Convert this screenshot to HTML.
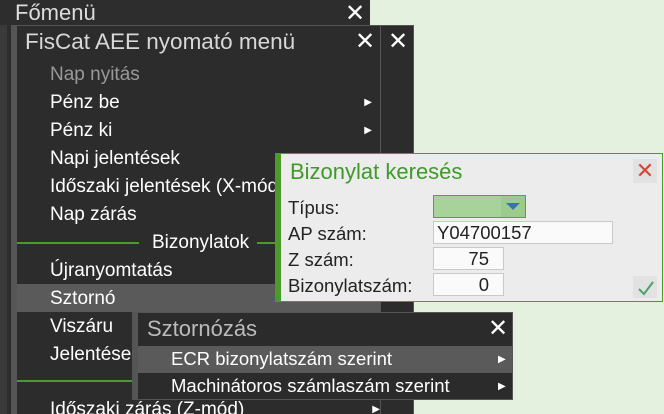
<!DOCTYPE html>
<html><head><meta charset="utf-8"><style>
*{margin:0;padding:0;box-sizing:border-box}
html{overflow:hidden;width:664px;height:414px}
body{width:664px;height:414px;overflow:hidden;background:#e4f1de;font-family:"Liberation Sans",Arial,sans-serif;position:relative}
.a{position:absolute}
.x{position:absolute;color:#fff;font-size:24px;line-height:24px}
.it{position:absolute;left:50px;color:#fff;font-size:19px;line-height:28px;height:28px;width:330px;white-space:nowrap;overflow:hidden}
.ar{position:absolute;right:8px;top:0;font-size:10px;color:#fff}
.lab{position:absolute;left:288px;font-size:18.5px;color:#222;line-height:20px}
.inp{position:absolute;background:#fafafa;border:1px solid #c9c9c9;font-size:18.5px;color:#222;line-height:21px;padding:0 3px}
</style></head><body>
<div class="a" style="left:0;top:0;width:370px;height:414px;background:#2d2d2d"></div>
<div class="a" style="left:0;top:25px;width:7px;height:389px;background:#3a3a3a"></div>
<div class="a" style="left:15px;top:1px;font-size:22px;color:#ddd;line-height:24px">Főmenü</div>
<div class="x" style="left:345px;top:2px">✕</div>
<div class="a" style="left:11px;top:25px;width:403px;height:389px;background:#555"></div>
<div class="a" style="left:17px;top:26px;width:363px;height:388px;background:#2c2c2c"></div>
<div class="a" style="left:381px;top:26px;width:32px;height:388px;background:#2c2c2c"></div>
<div class="a" style="left:25px;top:29px;font-size:22.5px;color:#d8d8d8;line-height:26px">FisCat AEE nyomató menü</div>
<div class="x" style="left:355px;top:30px">✕</div>
<div class="x" style="left:388px;top:30px">✕</div>
<div class="it" style="top:61px;color:#999">Nap nyitás</div>
<div class="it" style="top:89px">Pénz be<span class="ar">▶</span></div>
<div class="it" style="top:117px">Pénz ki<span class="ar">▶</span></div>
<div class="it" style="top:145px">Napi jelentések</div>
<div class="it" style="top:173px">Időszaki jelentések (X-mód)</div>
<div class="it" style="top:201px">Nap zárás</div>
<div class="a" style="left:17px;top:242px;width:122px;height:2px;background:#4c9a2a"></div>
<div class="a" style="left:257px;top:242px;width:20px;height:2px;background:#4c9a2a"></div>
<div class="it" style="top:229px;left:152px;width:110px">Bizonylatok</div>
<div class="it" style="top:257px">Újranyomtatás</div>
<div class="a" style="left:17px;top:284px;width:363px;height:28px;background:#5a5a5a"></div>
<div class="it" style="top:285px">Sztornó</div>
<div class="it" style="top:313px">Viszáru</div>
<div class="it" style="top:341px">Jelentések</div>
<div class="a" style="left:17px;top:380px;width:363px;height:2px;background:#4c9a2a"></div>
<div class="it" style="top:396px;height:18px">Időszaki zárás (Z-mód)<span class="ar" style="right:0">▶</span></div>

<div class="a" style="left:275px;top:153px;width:388px;height:149px;background:#ececec;border:1px solid #4c9a2a;border-left:6px solid #4c9a2a"></div>
<div class="a" style="left:290px;top:159px;font-size:22px;color:#3f9a2a;line-height:26px">Bizonylat keresés</div>
<div class="a" style="left:633px;top:159px;width:24px;height:24px;background:#e2e2e2;color:#d2483a;font-size:22px;line-height:24px;text-align:center">✕</div>
<div class="lab" style="top:198px">Típus:</div>
<div class="lab" style="top:224px">AP szám:</div>
<div class="lab" style="top:250px">Z szám:</div>
<div class="lab" style="top:276px">Bizonylatszám:</div>
<div class="a" style="left:433px;top:195px;width:93px;height:23px;background:#a7d39a;border:1px solid #5aa04a"><div class="a" style="right:0;top:0;width:24px;height:21px;background:#9ccb8d"></div><div class="a" style="right:5px;top:7px;width:0;height:0;border-left:7px solid transparent;border-right:7px solid transparent;border-top:7px solid #3a72b8"></div></div>
<div class="inp" style="left:433px;top:221px;width:180px;height:23px">Y04700157</div>
<div class="inp" style="left:433px;top:247px;width:71px;height:23px;text-align:right;padding-right:14px">75</div>
<div class="inp" style="left:433px;top:273px;width:71px;height:23px;text-align:right;padding-right:14px">0</div>
<div class="a" style="left:633px;top:276px;width:24px;height:22px;background:#e2e2e2"></div>
<svg class="a" style="left:636px;top:278px" width="20" height="20"><path d="M3 11 L8 16 L17 4" stroke="#4aa36a" stroke-width="2" fill="none"/></svg>

<div class="a" style="left:132px;top:312px;width:381px;height:88px;background:#555"></div>
<div class="a" style="left:138px;top:313px;width:374px;height:33px;background:#2b2b2b"></div>
<div class="a" style="left:147px;top:316px;font-size:22px;color:#bbb;line-height:26px">Sztornózás</div>
<div class="x" style="left:488px;top:317px">✕</div>
<div class="a" style="left:138px;top:346px;width:374px;height:27px;background:#5a5a5a"></div>
<div class="a" style="left:138px;top:373px;width:374px;height:26px;background:#2b2b2b"></div>
<div class="a" style="left:171px;top:348px;font-size:18.5px;color:#fff;line-height:22px">ECR bizonylatszám szerint</div>
<div class="a" style="left:498px;top:354px;font-size:10px;color:#fff">▶</div>
<div class="a" style="left:171px;top:375px;font-size:18.5px;color:#fff;line-height:22px">Machinátoros számlaszám szerint</div>
<div class="a" style="left:498px;top:381px;font-size:10px;color:#fff">▶</div>
</body></html>
